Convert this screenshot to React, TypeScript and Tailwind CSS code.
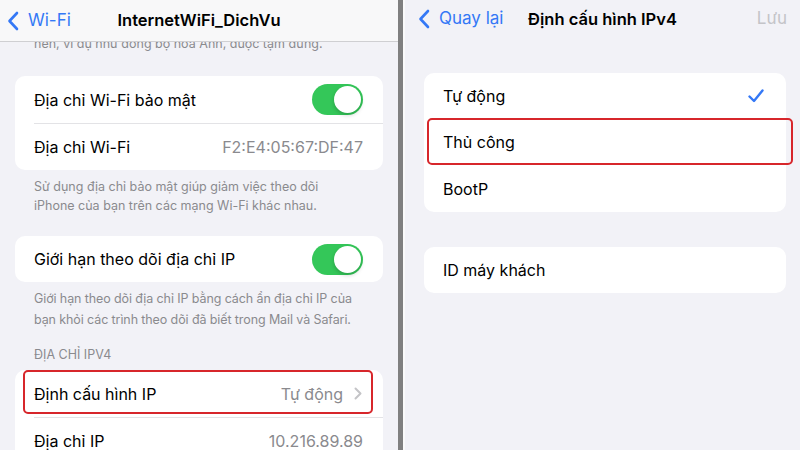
import React from "react";

const font = { fontFamily: "Inter, 'Noto Sans', 'Liberation Sans', sans-serif" };

function BackChevron() {
  return (
    <svg width="12" height="20" viewBox="0 0 12 20">
      <path d="M10 2 L2.5 10 L10 18" fill="none" stroke="#3478f6" strokeWidth="2.6" strokeLinecap="round" strokeLinejoin="round" />
    </svg>
  );
}

function Toggle() {
  return (
    <div className="relative w-[51px] h-[31px] rounded-full bg-[#34c759]">
      <div className="absolute right-[2px] top-[2px] w-[27px] h-[27px] rounded-full bg-white shadow-[0_2px_4px_rgba(0,0,0,0.2)]" />
    </div>
  );
}

function RowChevron() {
  return (
    <svg width="8" height="13" viewBox="0 0 8 13" className="ml-[11px]">
      <path d="M1.5 1.5 L6.5 6.5 L1.5 11.5" fill="none" stroke="#c4c4c7" strokeWidth="2" strokeLinecap="round" strokeLinejoin="round" />
    </svg>
  );
}

function Check() {
  return (
    <svg width="16" height="14" viewBox="0 0 16 14">
      <path d="M1.5 7.5 L6 12 L14.5 1.5" fill="none" stroke="#3478f6" strokeWidth="2.4" strokeLinecap="round" strokeLinejoin="round" />
    </svg>
  );
}

function LeftPanel() {
  return (
    <div className="w-[398px] h-[450px] shrink-0 flex flex-col bg-[#f2f2f7] overflow-hidden">
      {/* navigation bar */}
      <div className="h-[42px] shrink-0 relative flex items-center bg-[#f8f8f9] border-b border-[#cfcfd2]">
        <div className="flex items-center pl-[7px] gap-[9px] text-[#3478f6] text-[17px]">
          <BackChevron />
          <span>Wi-Fi</span>
        </div>
        <div className="absolute inset-0 flex items-center justify-center pointer-events-none">
          <span className="text-[16.5px] font-semibold text-black">InternetWiFi_DichVu</span>
        </div>
      </div>

      <div className="flex flex-col px-[15px]">
        {/* tail of the previous footer, scrolled under the bar */}
        <div className="h-[12px] overflow-hidden px-[19px]">
          <p className="-mt-[7px] text-[12.5px] leading-[18px] text-[#8a8a8e] whitespace-nowrap">
            nền, ví dụ như đồng bộ hóa Ảnh, được tạm dừng.
          </p>
        </div>

        <div className="mt-[22px] bg-white rounded-[10px] flex flex-col">
          <div className="h-[47px] flex items-center justify-between pl-[19px] pr-[20px]">
            <span className="text-[16px] text-black">Địa chỉ Wi-Fi bảo mật</span>
            <Toggle />
          </div>
          <div className="ml-[19px] h-px bg-[#e3e3e6]" />
          <div className="h-[46px] flex items-center justify-between pl-[19px] pr-[20px]">
            <span className="text-[16px] text-black">Địa chỉ Wi-Fi</span>
            <span className="text-[16px] text-[#8a8a8e]">F2:E4:05:67:DF:47</span>
          </div>
        </div>

        <p className="mt-[7px] px-[19px] text-[12.5px] leading-[19px] text-[#8a8a8e] whitespace-nowrap">
          Sử dụng địa chỉ bảo mật giúp giảm việc theo dõi
          <br />
          iPhone của bạn trên các mạng Wi-Fi khác nhau.
        </p>

        <div className="mt-[21px] bg-white rounded-[10px]">
          <div className="h-[46px] flex items-center justify-between pl-[19px] pr-[20px]">
            <span className="text-[16px] text-black">Giới hạn theo dõi địa chỉ IP</span>
            <Toggle />
          </div>
        </div>

        <p className="mt-[6px] px-[19px] text-[12.5px] leading-[21px] text-[#8a8a8e] whitespace-nowrap tracking-[-0.1px]">
          Giới hạn theo dõi địa chỉ IP bằng cách ẩn địa chỉ IP của
          <br />
          bạn khỏi các trình theo dõi đã biết trong Mail và Safari.
        </p>

        <p className="mt-[17px] px-[19px] text-[12.5px] leading-[16px] text-[#8a8a8e] uppercase">ĐỊA CHỈ IPV4</p>

        <div className="mt-[7px] bg-white rounded-[10px] flex flex-col">
          <div className="relative h-[47px] flex items-center justify-between pl-[19px] pr-[21px]">
            <span className="text-[16px] text-black">Định cấu hình IP</span>
            <div className="flex items-center">
              <span className="text-[16px] text-[#8a8a8e]">Tự động</span>
              <RowChevron />
            </div>
            <div className="absolute left-[8px] right-[10px] top-0 h-[44px] rounded-[5px] border-2 border-[#d7262b]" />
          </div>
          <div className="ml-[19px] h-px bg-[#e3e3e6]" />
          <div className="h-[46px] flex items-center justify-between pl-[19px] pr-[20px]">
            <span className="text-[16px] text-black">Địa chỉ IP</span>
            <span className="text-[16px] text-[#8a8a8e]">10.216.89.89</span>
          </div>
        </div>
      </div>
    </div>
  );
}

function RightPanel() {
  return (
    <div className="flex-1 h-[450px] flex flex-col bg-[#f2f2f7] overflow-hidden">
      <div className="h-[38px] shrink-0 relative flex items-center">
        <div className="flex items-center pl-[13px] gap-[9px] text-[#3478f6] text-[17px]">
          <BackChevron />
          <span>Quay lại</span>
        </div>
        <div className="absolute inset-0 flex items-center justify-center pointer-events-none">
          <span className="text-[16.5px] font-semibold text-black">Định cấu hình IPv4</span>
        </div>
        <span className="ml-auto pr-[13px] text-[17px] text-[#c4c4c8]">Lưu</span>
      </div>

      <div className="flex flex-col pl-[19px] pr-[14px]">
        <div className="mt-[35px] bg-white rounded-[10px] flex flex-col">
          <div className="h-[46px] flex items-center justify-between pl-[19px] pr-[22px]">
            <span className="text-[16px] text-black">Tự động</span>
            <Check />
          </div>
          <div className="relative h-[46px] flex items-center pl-[19px]">
            <span className="text-[16px] text-black">Thủ công</span>
            <div className="absolute left-[3px] right-[-7px] top-[-1px] h-[47px] rounded-[5px] border-2 border-[#d7262b]" />
          </div>
          <div className="h-[47px] flex items-center pl-[19px]">
            <span className="text-[16px] text-black">BootP</span>
          </div>
        </div>

        <div className="mt-[35px] bg-white rounded-[10px]">
          <div className="h-[46px] flex items-center pl-[19px]">
            <span className="text-[16px] text-black">ID máy khách</span>
          </div>
        </div>
      </div>
    </div>
  );
}

export default function App() {
  return (
    <div className="w-[800px] h-[450px] flex overflow-hidden" style={font}>
      <LeftPanel />
      <div className="w-[5px] shrink-0 bg-[#808080]" />
      <div className="w-[2px] shrink-0 bg-[#fafafa]" />
      <RightPanel />
    </div>
  );
}
